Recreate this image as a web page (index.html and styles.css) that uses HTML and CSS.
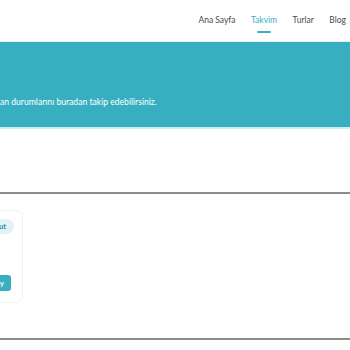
FILE: index.html
```html
<!DOCTYPE html>
<html lang="tr">
<head>
  <meta charset="UTF-8" />
  <meta name="viewport" content="width=device-width, initial-scale=1.0"/>
  <title>Takvim</title>
  <link rel="stylesheet" href="styles.css">
</head>
<body>
  <header>
    <nav>
      <a href="#">Ana Sayfa</a>
      <a href="#" class="active">Takvim</a>
      <a href="#">Turlar</a>
      <a href="#">Blog</a>
    </nav>
  </header>

  <section class="hero">
    <p>an durumlarını buradan takip edebilirsiniz.</p>
  </section>

  <div class="filters"></div>

  <main class="tours">
    <div class="card">
      <span class="badge">Mevcut</span>
      <button>Detay</button>
    </div>
  </main>
</body>
</html>
```

FILE: styles.css
```css
:root {
  --teal: #38afc1;
  --text: #3a3a3a;
  --line: #8c8c8c;
}
* { box-sizing: border-box; margin: 0; padding: 0; }
body {
  font-family: 'Lato', 'Noto Sans', sans-serif;
  background: #fff;
  color: var(--text);
  overflow-x: hidden;
}
header {
  height: 42px;
  display: flex;
  justify-content: flex-end;
  align-items: center;
  padding-right: 4px;
  border-bottom: 1px solid #e4eef0;
}
nav { display: flex; gap: 15.5px; }
nav a {
  position: relative;
  text-decoration: none;
  color: #4a4a4a;
  font-size: 8.5px;
  padding-bottom: 2px;
}
nav a.active { color: var(--teal); }
nav a.active::after {
  content: "";
  position: absolute;
  left: 50%;
  bottom: -6px;
  width: 14px;
  height: 2px;
  margin-left: -7px;
  background: var(--teal);
  border-radius: 1px;
}
.hero {
  background: var(--teal);
  height: 87px;
  padding-top: 55px;
  border-bottom: 2px solid #c9eef4;
}
.hero p {
  color: #fff;
  font-size: 8.6px;
}
.filters {
  height: 65px;
  border-bottom: 2px solid var(--line);
}
.tours {
  padding: 16px 0 35px;
  border-bottom: 2px solid var(--line);
}
.card {
  width: 120px;
  height: 93px;
  margin-left: -97px;
  border: 1px solid #eef4f6;
  border-radius: 7px;
  padding: 8px 8px 11px 10px;
  display: flex;
  flex-direction: column;
  align-items: flex-end;
  justify-content: space-between;
}
.badge {
  background: #e2f3f6;
  color: #2d8a99;
  font-size: 7.5px;
  font-weight: 700;
  padding: 3px 8px;
  border-radius: 10px;
}
button {
  background: var(--teal);
  color: #fff;
  border: none;
  border-radius: 3px;
  font-family: inherit;
  font-size: 7.5px;
  font-weight: 700;
  padding: 0 7px;
  height: 16px;
  margin-right: 3px;
}
```
